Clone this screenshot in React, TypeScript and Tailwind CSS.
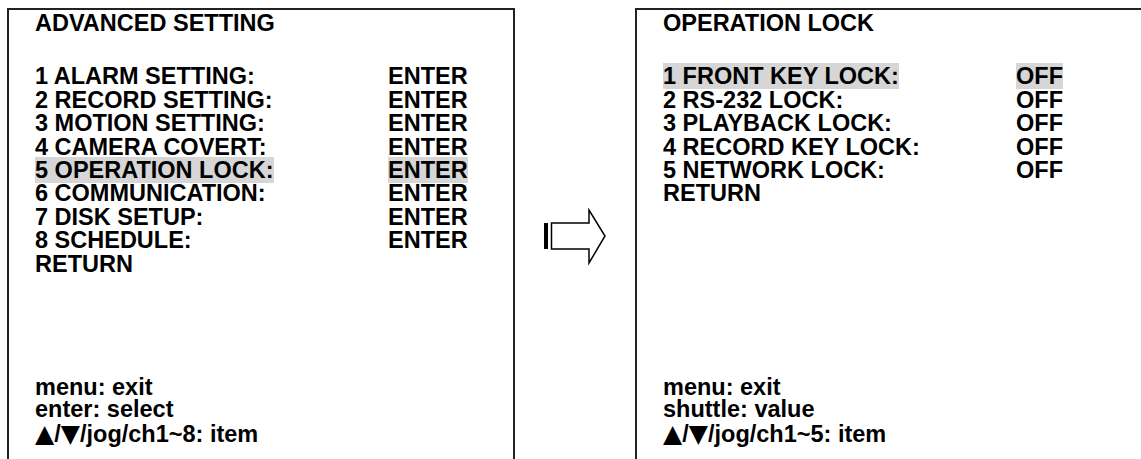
const left = [
  ['1 ALARM SETTING:', 'ENTER'],
  ['2 RECORD SETTING:', 'ENTER'],
  ['3 MOTION SETTING:', 'ENTER'],
  ['4 CAMERA COVERT:', 'ENTER'],
  ['5 OPERATION LOCK:', 'ENTER'],
  ['6 COMMUNICATION:', 'ENTER'],
  ['7 DISK SETUP:', 'ENTER'],
  ['8 SCHEDULE:', 'ENTER'],
];

const right = [
  ['1 FRONT KEY LOCK:', 'OFF'],
  ['2 RS-232 LOCK:', 'OFF'],
  ['3 PLAYBACK LOCK:', 'OFF'],
  ['4 RECORD KEY LOCK:', 'OFF'],
  ['5 NETWORK LOCK:', 'OFF'],
];

// ▲/▼ glyphs are bigger than the text around them
function Keys({ rest }: { rest: string }) {
  return (
    <div className="h-[22.5px] leading-[17px]">
      <span className="font-['DejaVu_Sans',sans-serif] text-[25px] leading-none">▲</span>/
      <span className="font-['DejaVu_Sans',sans-serif] text-[25px] leading-none">▼</span>
      {rest}
    </div>
  );
}

function Menu({
  title,
  rows,
  active,
  footer,
  keys,
}: {
  title: string;
  rows: string[][];
  active: number;
  footer: string[];
  keys: string;
}) {
  return (
    <div className="mt-[8px] h-[470px] shrink-0 border-2 border-[#222] bg-white pl-[26px] pt-[2px] pb-[33px] flex flex-col text-black font-bold text-[23.5px] leading-[23.4px] font-['Liberation_Sans',Arial,sans-serif]">
      <div>{title}</div>
      <div className="mt-[30px]">
        {rows.map(([label, value], i) => (
          <div key={label} className="grid grid-cols-[353px_auto]">
            <div>
              <span className={i === active ? 'bg-[#d6d6d6]' : ''}>{label}</span>
            </div>
            <div>
              <span className={i === active ? 'bg-[#d6d6d6]' : ''}>{value}</span>
            </div>
          </div>
        ))}
        <div>RETURN</div>
      </div>
      <div className="mt-auto leading-[22.5px]">
        {footer.map((f) => (
          <div key={f}>{f}</div>
        ))}
        <Keys rest={keys} />
      </div>
    </div>
  );
}

function Arrow() {
  return (
    <svg width="64" height="58" viewBox="0 0 64 58" className="mt-[208px]">
      <rect x="1" y="15" width="4" height="26" fill="#000" />
      <path
        d="M8.5 15 H46 V2 L62 28 L46 55 V41 H8.5 Z"
        fill="#fff"
        stroke="#000"
        strokeWidth="1.5"
      />
    </svg>
  );
}

export default function App() {
  return (
    <div className="w-[1141px] h-[459px] overflow-hidden bg-white flex items-start">
      <div className="ml-[7px] w-[508px] shrink-0">
        <Menu
          title="ADVANCED SETTING"
          rows={left}
          active={4}
          footer={['menu: exit', 'enter: select']}
          keys="/jog/ch1~8: item"
        />
      </div>
      <div className="w-[120px] shrink-0 flex justify-center">
        <Arrow />
      </div>
      <div className="w-[520px] shrink-0">
        <Menu
          title="OPERATION LOCK"
          rows={right}
          active={0}
          footer={['menu: exit', 'shuttle: value']}
          keys="/jog/ch1~5: item"
        />
      </div>
    </div>
  );
}
